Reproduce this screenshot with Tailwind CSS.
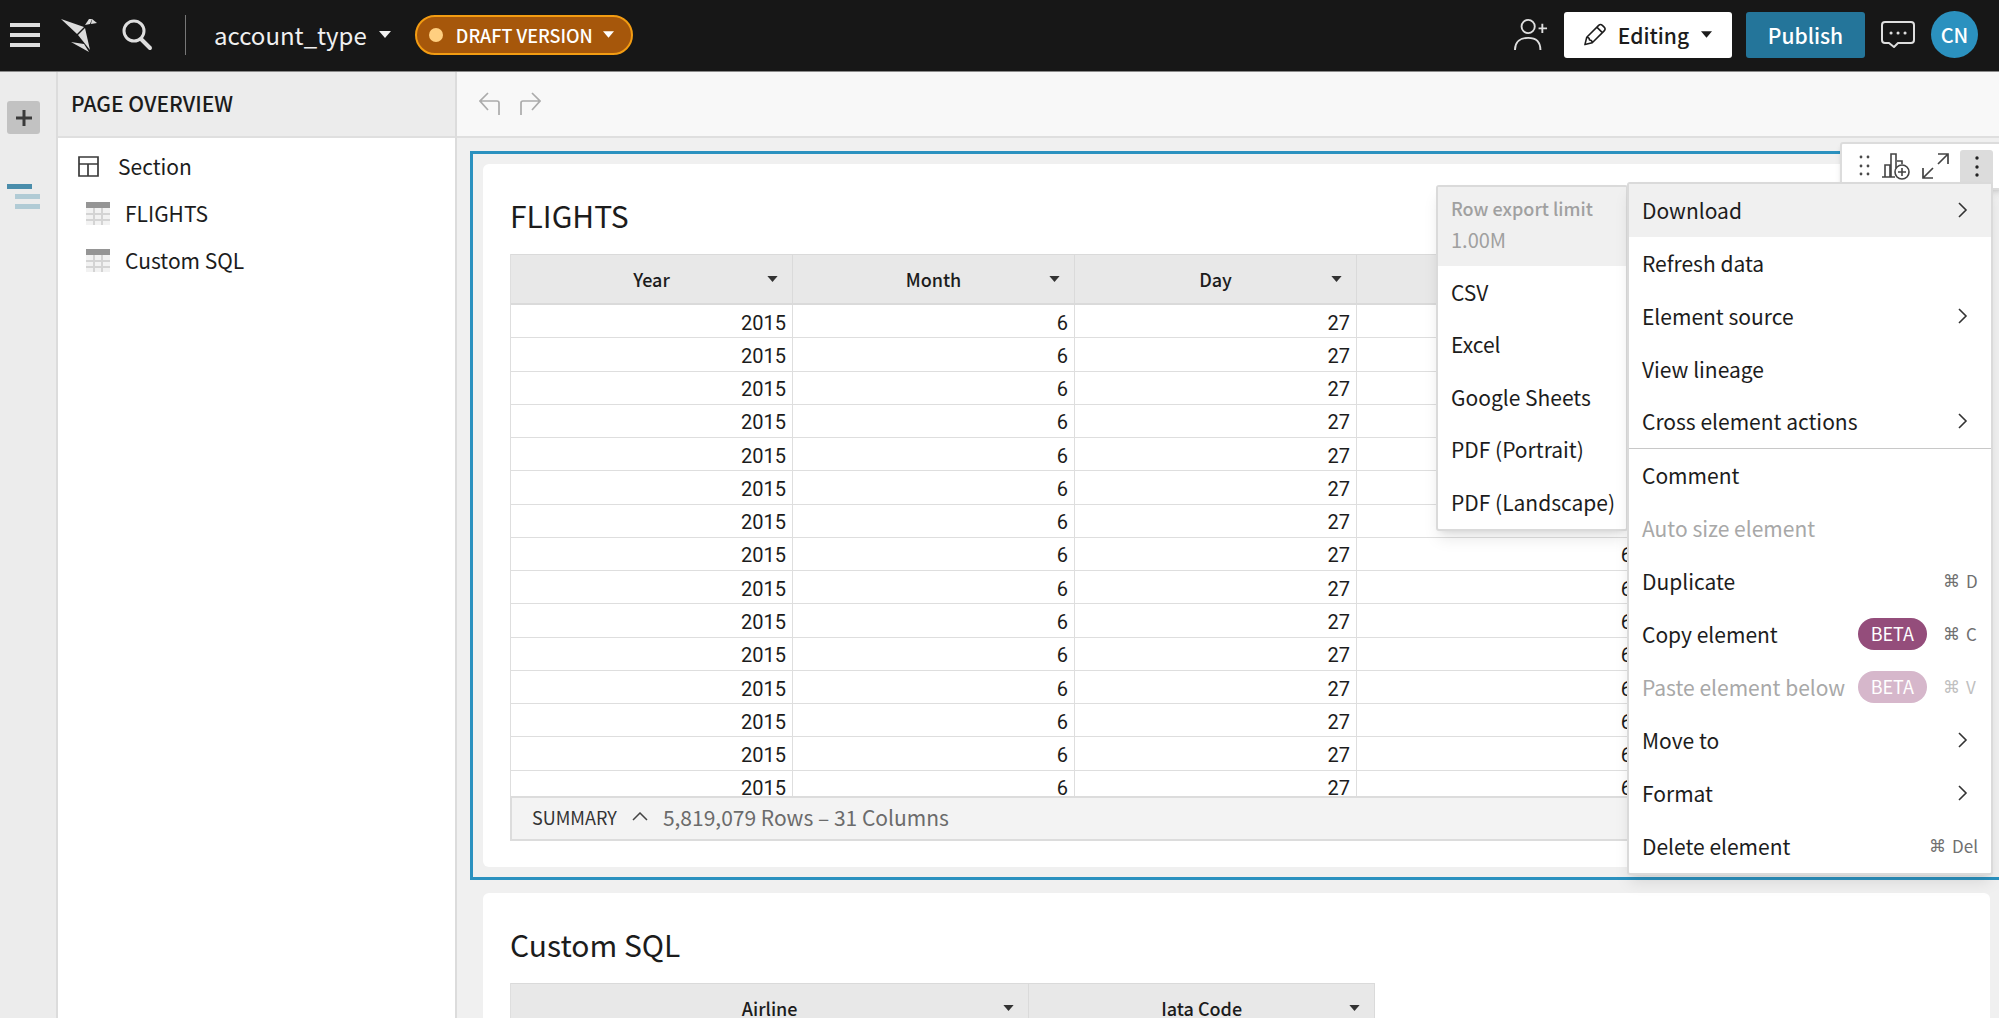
<!DOCTYPE html>
<html lang="en">
<head>
    <meta charset="UTF-8">
    <meta name="viewport" content="width=device-width, initial-scale=1.0">
    <title>account_type</title>
    <script src="https://cdn.jsdelivr.net/npm/@tailwindcss/browser@4"></script>
</head>
<body class="font-['Noto_Sans_CJK_SC',sans-serif] h-screen overflow-hidden flex flex-col bg-[#f0f0f0] text-[#1c1c1c] text-[21px] leading-8">
    <!-- Top bar -->
    <header class="h-[72px] shrink-0 bg-[#171717] border-b border-[#8a8a8a] text-[#f0f0f0] flex items-center pb-0.5 pl-[9px] pr-[21px]">
        <button aria-label="Menu">
            <svg class="w-8 h-8" viewBox="0 0 32 32" stroke="#dedede" stroke-width="4"><path d="M1 6h30M1 16h30M1 26h30"/></svg>
        </button>
        <a href="#" aria-label="Home" class="ml-5">
            <svg class="w-9 h-9" viewBox="0 0 36 36" fill="#dcdcdc"><path d="M0 2l23 8-7 7z"/><path d="M24 8l4-6h3l-2 5z"/><path d="M31 2l5 4-6 1z"/><path d="M24 11l5 22-12-15z"/><path d="M10 25l13 2 5 8z"/></svg>
        </a>
        <button aria-label="Search" class="ml-6">
            <svg class="w-8 h-8" viewBox="0 0 32 32" fill="none" stroke="#dedede" stroke-width="3" stroke-linecap="round"><circle cx="13" cy="12" r="10"/><path stroke-width="4" d="M20 20l9 9"/></svg>
        </button>
        <div class="w-px h-10 bg-[#777] ml-8"></div>
        <button class="ml-7 flex items-center gap-3 text-2xl">account_type
            <svg class="w-3 h-[7px]" viewBox="0 0 12 7" fill="currentColor"><path d="M0 0h12L6 7z"/></svg>
        </button>
        <button class="ml-6 h-10 rounded-full border-2 border-[#f39c12] bg-[#a6570b] pl-3 pr-[17px] flex items-center text-lg font-medium text-white">
            <span class="w-[14px] h-[14px] rounded-full bg-[#ffcf80] mr-[13px]"></span>DRAFT VERSION
            <svg class="w-[11px] h-[7px] ml-2.5" viewBox="0 0 12 7" fill="currentColor"><path d="M0 0h12L6 7z"/></svg>
        </button>
        <div class="ml-auto flex items-center">
            <button aria-label="Share">
                <svg class="w-[34px] h-[34px]" viewBox="0 0 36 36" fill="none" stroke="#dedede" stroke-width="2"><circle cx="15" cy="9" r="7"/><path d="M1 34c0-9 6-13 14-13s13 4 13 13M26 11h9M30 6v10"/></svg>
            </button>
            <button class="ml-4 h-[46px] w-[168px] rounded-[3px] bg-white text-[#1c1c1c] font-medium flex items-center justify-center">
                <svg class="w-[22px] h-[23px] mr-3" viewBox="0 0 24 24" fill="none" stroke="#1c1c1c" stroke-width="1.7" stroke-linejoin="round"><path d="M1 23l2-8L16 2q2-2 4 0l2 2q2 2 0 4L9 21zM14 4l6 6M3 15q3 0 3 3 3 0 3 3"/></svg>
                Editing
                <svg class="w-[11px] h-[7px] ml-3" viewBox="0 0 12 7" fill="currentColor"><path d="M0 0h12L6 7z"/></svg>
            </button>
            <button class="ml-[14px] h-[46px] w-[119px] rounded-[3px] bg-[#24759a] text-white font-medium">Publish</button>
            <button aria-label="Comments" class="ml-4">
                <svg class="w-[34px] h-[30px]" viewBox="0 0 34 30" fill="none" stroke="#dedede" stroke-width="2" stroke-linejoin="round"><path d="M4 2h26q3 0 3 3v15q0 3-3 3H17l-4 4-5-4H4q-3 0-3-3V5q0-3 3-3z"/><path stroke-width="3" stroke-linecap="round" d="M10 13h.1M17 13h.1M24 13h.1"/></svg>
            </button>
            <button class="ml-4 w-[47px] h-[47px] rounded-full bg-[#2b91bf] text-white font-medium text-xl">CN</button>
        </div>
    </header>

    <div class="flex flex-1 min-h-0">
        <!-- Icon rail -->
        <nav class="w-[58px] shrink-0 bg-[#ececec] border-r-2 border-[#dcdcdc] pl-[7px] pt-[29px] flex flex-col items-start">
            <button aria-label="Add element" class="w-[33px] h-[33px] rounded-[3px] bg-[#c2c2c2] flex items-center justify-center">
                <svg class="w-4 h-4" viewBox="0 0 16 16" stroke="#3a3a3a" stroke-width="3"><path d="M0 8h16M8 0v16"/></svg>
            </button>
            <button aria-label="Page overview" class="mt-[50px]">
                <svg class="w-[33px] h-[26px]" viewBox="0 0 33 26"><path fill="#4a8dab" d="M0 0h25v5H0z"/><path fill="#b1cbd5" d="M8 10h25v5H8zM8 20h25v5H8z"/></svg>
            </button>
        </nav>

        <!-- Page overview -->
        <aside class="w-[399px] shrink-0 bg-white border-r-2 border-[#dcdcdc]">
            <h2 class="h-[66px] bg-[#ececec] border-b-2 border-[#dfdfdf] pl-[13px] pb-0.5 flex items-center font-medium">PAGE OVERVIEW</h2>
            <ul class="pt-[5px]">
                <li>
                    <a href="#" class="h-[47px] flex items-center pl-5">
                        <svg class="w-[21px] h-[21px] mr-[19px]" viewBox="0 0 21 21" fill="none" stroke="#3a3a3a" stroke-width="1.7"><path d="M1 1h19v19H1zM1 8h19M10 8v12"/></svg>
                        <span class="pb-0.5">Section</span>
                    </a>
                </li>
                <li>
                    <a href="#" class="h-[47px] flex items-center pl-7">
                        <svg class="w-6 h-6 mr-[15px]" viewBox="0 0 24 24"><path fill="#f2f2f2" d="M0 6h24v17H0z"/><path stroke="#d4d4d4" stroke-width="2" d="M0 12h24M0 18h24M8 6v17M16 6v17"/><path fill="#959595" d="M0 0h24v6H0z"/></svg>
                        <span class="pb-0.5">FLIGHTS</span>
                    </a>
                </li>
                <li>
                    <a href="#" class="h-[47px] flex items-center pl-7">
                        <svg class="w-6 h-6 mr-[15px]" viewBox="0 0 24 24"><path fill="#f2f2f2" d="M0 6h24v17H0z"/><path stroke="#d4d4d4" stroke-width="2" d="M0 12h24M0 18h24M8 6v17M16 6v17"/><path fill="#959595" d="M0 0h24v6H0z"/></svg>
                        <span class="pb-0.5">Custom SQL</span>
                    </a>
                </li>
            </ul>
        </aside>

        <main class="flex-1 min-w-0 flex flex-col">
            <div class="h-[66px] shrink-0 bg-[#f8f8f8] border-b-2 border-[#dfdfdf] flex items-center gap-[18px] pl-[22px]">
                <button aria-label="Undo">
                    <svg class="w-[22px] h-6" viewBox="0 0 22 24" fill="none" stroke="#ababab" stroke-width="1.7"><path d="M9 1L1 9l8 9M1 9h17q2 0 2 2v12"/></svg>
                </button>
                <button aria-label="Redo">
                    <svg class="w-[22px] h-6" viewBox="0 0 22 24" fill="none" stroke="#ababab" stroke-width="1.7"><path d="M13 1l8 8-8 9M21 9H4q-2 0-2 2v12"/></svg>
                </button>
            </div>

            <!-- Canvas -->
            <div class="relative flex-1 min-h-0 overflow-hidden pt-[13px] pl-[13px]">
                <section class="-mr-1 border-[3px] border-[#2b91bf] p-2.5">
                    <div class="bg-white rounded-md pl-[27px] pt-[31px] pb-[26px]">
                        <h3 class="text-3xl leading-10 mb-[19px]">FLIGHTS</h3>
                        <div class="h-[542px] overflow-hidden">
                            <table class="table-fixed w-full h-[550px] border-separate border-spacing-0 border-l border-[#dedede]">
                                <thead>
                                    <tr id="flights-head" class="h-[51px] bg-[#e8e8e8]"></tr>
                                </thead>
                                <tbody id="flights-body" class="font-['Roboto',sans-serif] text-xl leading-6 text-right"></tbody>
                            </table>
                        </div>
                        <div class="h-[45px] bg-[#f3f3f3] border-2 border-[#dcdcdc] pl-5 pb-1 flex items-center text-[#6b6b6b]">
                            <button class="flex items-center text-lg text-[#333]">SUMMARY
                                <svg class="w-4 h-[9px] mx-[15px]" viewBox="0 0 16 9" fill="none" stroke="#444" stroke-width="1.5"><path d="M1 8l7-7 7 7"/></svg>
                            </button>
                            5,819,079 Rows – 31 Columns
                        </div>
                    </div>
                </section>

                <section class="mt-[13px] ml-[13px] mr-[9px] bg-white rounded-t-md pl-[27px] pt-[31px]">
                    <h3 class="text-3xl leading-10 mb-[19px]">Custom SQL</h3>
                    <table class="table-fixed w-[865px] border-separate border-spacing-0 border-l border-[#dedede]">
                        <colgroup><col class="w-3/5"><col class="w-2/5"></colgroup>
                        <thead>
                            <tr id="sql-head" class="h-[51px] bg-[#e8e8e8]"></tr>
                        </thead>
                    </table>
                </section>

                <!-- Element toolbar -->
                <div class="absolute top-1 -right-1 w-[163px] h-[48px] bg-white border-2 border-[#dcdcdc] rounded-[3px] shadow-md flex items-start pt-1.5 pl-4">
                    <button aria-label="Drag" class="h-8 flex items-center">
                        <svg class="w-3 h-6" viewBox="0 0 12 24" fill="#4a4a4a"><circle cx="3" cy="3" r="1.4"/><circle cx="10" cy="3" r="1.4"/><circle cx="3" cy="12" r="1.4"/><circle cx="10" cy="12" r="1.4"/><circle cx="3" cy="20" r="1.4"/><circle cx="10" cy="20" r="1.4"/></svg>
                    </button>
                    <button aria-label="Add child chart" class="h-8 ml-3 flex items-center">
                        <svg class="w-7 h-7" viewBox="0 0 28 28" fill="none" stroke="#444" stroke-width="1.6"><path d="M0 25h13M3 25V13h5v12M9 25V2h5v14M15 9h5v3"/><circle cx="20" cy="20" r="7"/><path d="M16 20h8M20 16v8"/></svg>
                    </button>
                    <button aria-label="Maximize" class="h-8 ml-3 flex items-center">
                        <svg class="w-[27px] h-7" viewBox="0 0 27 28" fill="none" stroke="#444" stroke-width="1.7"><path d="M16 2h10v10M26 2L16 12M1 16v10h10M1 26l10-10"/></svg>
                    </button>
                    <button aria-label="More" class="w-[33px] h-[34px] ml-[11px] rounded-t-[3px] bg-[#dcdcdc] flex items-center justify-center">
                        <svg class="w-1 h-6" viewBox="0 0 4 24" fill="#222"><circle cx="2" cy="3" r="1.7"/><circle cx="2" cy="12" r="1.7"/><circle cx="2" cy="20" r="1.7"/></svg>
                    </button>
                </div>

                <!-- Download submenu -->
                <div class="absolute top-[47px] right-[371px] w-[192px] bg-white border-2 border-[#dadada] rounded-[3px] shadow-lg flex flex-col">
                    <div class="h-[79px] bg-[#f0f0f0] pl-[13px] pt-1.5 text-[#a0a0a0]">
                        <div class="text-lg leading-[31px] font-medium">Row export limit</div>
                        <div class="leading-[31px] text-xl">1.00M</div>
                    </div>
                    <button class="h-[53px] pl-[13px] pb-0.5 text-left">CSV</button>
                    <button class="h-[52px] pl-[13px] pb-0.5 text-left">Excel</button>
                    <button class="h-[53px] pl-[13px] pb-0.5 text-left">Google Sheets</button>
                    <button class="h-[52px] pl-[13px] pb-0.5 text-left">PDF (Portrait)</button>
                    <button class="h-[53px] pl-[13px] pb-0.5 text-left">PDF (Landscape)</button>
                </div>

                <!-- Element menu -->
                <div class="absolute top-11 right-[6px] w-[366px] bg-white border-2 border-[#dadada] rounded-[3px] shadow-lg flex flex-col" id="menu"></div>
            </div>
        </main>
    </div>

    <script>
        const headCell = name => `
            <th class="border-t border-r border-b-2 border-[#dadada] font-medium text-lg p-0">
                <div class="grid grid-cols-[1fr_auto_1fr] items-center">
                    <span></span>${name}
                    <svg class="w-[11px] h-[6px] mr-[14px] justify-self-end" viewBox="0 0 12 7" fill="#333"><path d="M0 0h12L6 7z"/></svg>
                </div>
            </th>`;
        document.getElementById('flights-head').innerHTML =
            ['Year', 'Month', 'Day', 'Day Of Week'].map(headCell).join('').replaceAll('<th class="', '<th class="w-[282px] ') + headCell('Airline');
        document.getElementById('sql-head').innerHTML = ['Airline', 'Iata Code'].map(headCell).join('');

        const flight = [2015, 6, 27, 6, 'AA'];
        document.getElementById('flights-body').innerHTML = Array.from({ length: 15 }, () =>
            '<tr>' + flight.map(v => `<td class="border-r border-b border-[#dedede] pt-[3px] pb-0 pl-0 pr-1.5">${v}</td>`).join('') + '</tr>'
        ).join('');

        const items = [
            { label: 'Download', sub: true, active: true },
            { label: 'Refresh data' },
            { label: 'Element source', sub: true },
            { label: 'View lineage' },
            { label: 'Cross element actions', sub: true, line: true },
            { label: 'Comment' },
            { label: 'Auto size element', off: true },
            { label: 'Duplicate', key: 'D' },
            { label: 'Copy element', beta: true, key: 'C' },
            { label: 'Paste element below', beta: true, key: 'V', off: true },
            { label: 'Move to', sub: true },
            { label: 'Format', sub: true },
            { label: 'Delete element', key: 'Del' }
        ];
        document.getElementById('menu').innerHTML = items.map(i => `
            <button class="h-[53px] pl-[13px] pr-[13px] pb-0.5 flex items-center text-left whitespace-nowrap ${i.active ? 'bg-[#f0f0f0]' : ''} ${i.off ? 'text-[#a8a8a8]' : ''} ${i.line ? 'border-b border-[#c8c8c8]' : ''}" ${i.off ? 'disabled' : ''}>
                <span class="flex-1">${i.label}</span>
                ${i.beta ? `<span class="h-8 px-[13px] rounded-full text-lg leading-[30px] mr-4 text-white ${i.off ? 'bg-[#d6b7cb]' : 'bg-[#944d7b]'}">BETA</span>` : ''}
                ${i.key ? `<span class="flex items-center gap-1.5 text-[17px] ${i.off ? 'text-[#c0c0c0]' : 'text-[#707070]'}"><span class="font-['DejaVu_Sans',sans-serif] text-[17px]">⌘</span><span class="min-w-3">${i.key}</span></span>` : ''}
                ${i.sub ? '<svg class="w-[10px] h-4 mr-[10px]" viewBox="0 0 10 16" fill="none" stroke="#333" stroke-width="1.6"><path d="M1 1l7 7-7 7"/></svg>' : ''}
            </button>`).join('');
    </script>
</body>
</html>
